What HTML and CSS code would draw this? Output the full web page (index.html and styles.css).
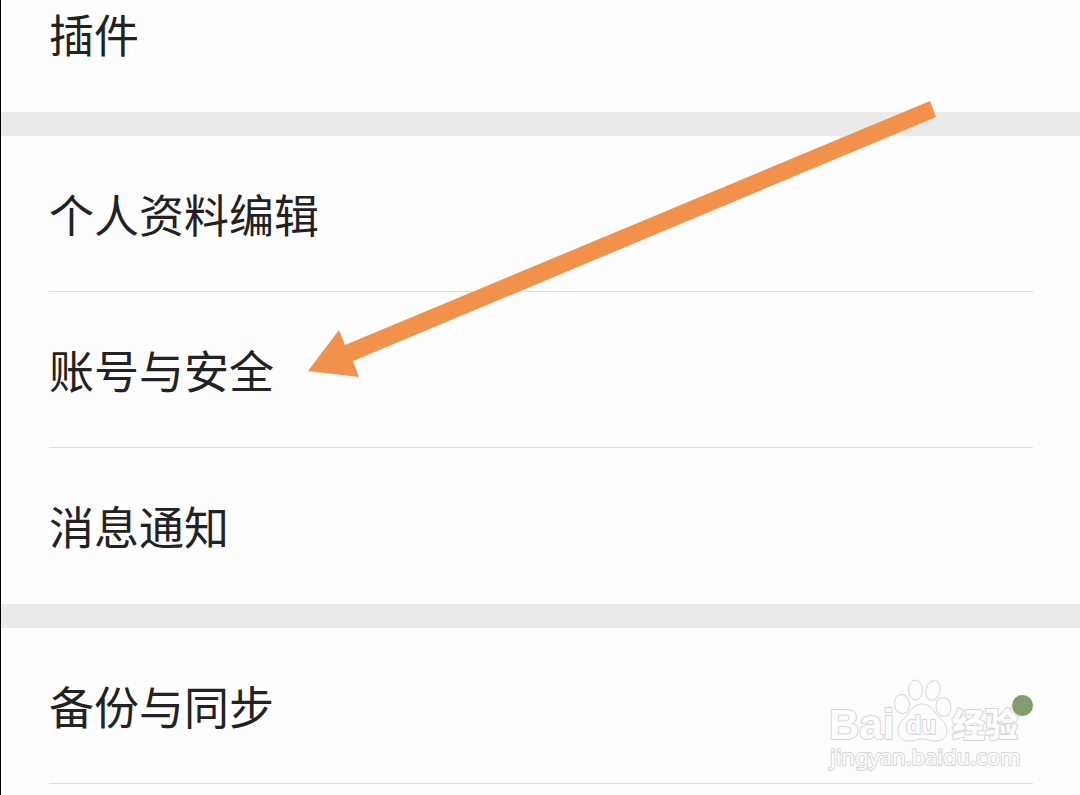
FILE: index.html
```html
<!DOCTYPE html>
<html lang="zh-CN">
<head>
    <meta charset="UTF-8">
    <meta name="viewport" content="width=device-width, initial-scale=1.0">
    <title>设置</title>
    <link rel="stylesheet" href="styles.css">
</head>
<body>

    <main class="settings">
        <!-- Plugins -->
        <ul class="group group-first">
            <li><a class="row" href="#">插件</a></li>
        </ul>

        <!-- Account -->
        <ul class="group">
            <li><a class="row" href="#">个人资料编辑</a></li>
            <li><a class="row" href="#">账号与安全</a></li>
            <li><a class="row" href="#">消息通知</a></li>
        </ul>

        <!-- Backup -->
        <ul class="group group-last">
            <li><a class="row" href="#">备份与同步<span class="dot"></span></a></li>
        </ul>

        <!-- Arrow pointing at the account row -->
        <svg class="arrow" width="640" height="290" viewBox="300 95 640 290" aria-hidden="true">
            <path d="M308 371 L339 330 L345 345 L930 101 L936 117 L353 361 L359 377 Z"/>
        </svg>

        <!-- Watermark -->
        <svg class="watermark" width="210" height="105" viewBox="822 672 210 105">
            <text class="wm-bai" x="829" y="739">Bai</text>
            <g class="wm-paw">
                <ellipse cx="902" cy="704" rx="7.5" ry="9.5" transform="rotate(-10 902 704)"/>
                <ellipse cx="915.5" cy="690" rx="7" ry="10"/>
                <ellipse cx="933" cy="690.5" rx="7" ry="10" transform="rotate(14 933 690.5)"/>
                <ellipse cx="943.5" cy="707" rx="7.5" ry="9.5" transform="rotate(-10 943.5 707)"/>
                <path d="M922 704 C929 704 933 709 937 715 C941 720 947 723 947 731 C947 738 942 741 936 741 C930 741 927 739 922 739 C917 739 914 741 908 741 C902 741 898 737 898 730 C898 723 904 719 908 714 C912 708 916 704 922 704 Z"/>
            </g>
            <text class="wm-du" x="906" y="734">du</text>
            <text class="wm-cn" x="952" y="737">经验</text>
            <text class="wm-url" x="830" y="765">jingyan.baidu.com</text>
        </svg>
    </main>

</body>
</html>
```

FILE: styles.css
```css
/* General Reset */
* {
    margin: 0;
    padding: 0;
    box-sizing: border-box;
}

/* Body Styling */
body {
    background-color: #fdfdfd;
    color: #222222;
    font-family: "Noto Sans CJK SC", sans-serif;
    overflow: hidden;
}

.settings {
    position: relative;
    min-height: 100vh;
    border-left: 1px solid #000000;
    overflow: hidden;
}

/* Group Styling */
.group {
    padding: 0 47px 0 48px;
    border-bottom: 24px solid #eaeaea;
    list-style: none;
}

/* The list is scrolled, so the top row is partly hidden */
.group-first {
    margin-top: -44px;
}

.group-last {
    border-bottom: none;
}

/* Row Styling */
.row {
    display: flex;
    justify-content: space-between;
    align-items: center;
    height: 156px;
    border-bottom: 1px solid #dedede;
    color: #222222;
    font-size: 45px;
    line-height: 60px;
    text-decoration: none;
}

.group:not(.group-last) li:last-child .row {
    border-bottom-color: transparent;
}

.dot {
    width: 21px;
    height: 21px;
    border-radius: 50%;
    background-color: #7f9f6b;
}

/* Arrow Styling */
.arrow {
    position: absolute;
    top: 95px;
    left: 299px;
    fill: #f2924a;
    pointer-events: none;
}

/* Watermark Styling */
.watermark {
    position: absolute;
    top: 672px;
    right: 48px;
    fill: #fdfdfd;
    stroke: #d6d6d6;
    stroke-width: 2px;
    stroke-linejoin: round;
    paint-order: stroke;
    pointer-events: none;
}

.wm-paw {
    stroke-width: 1px;
    paint-order: normal;
}

.wm-bai {
    font: bold 42px "Liberation Sans", sans-serif;
}

.wm-du {
    font: bold 25px "Liberation Sans", sans-serif;
}

.wm-cn {
    font: 900 33px "Noto Sans CJK SC", sans-serif;
}

.wm-url {
    font: 22px "Noto Sans", sans-serif;
}
```
